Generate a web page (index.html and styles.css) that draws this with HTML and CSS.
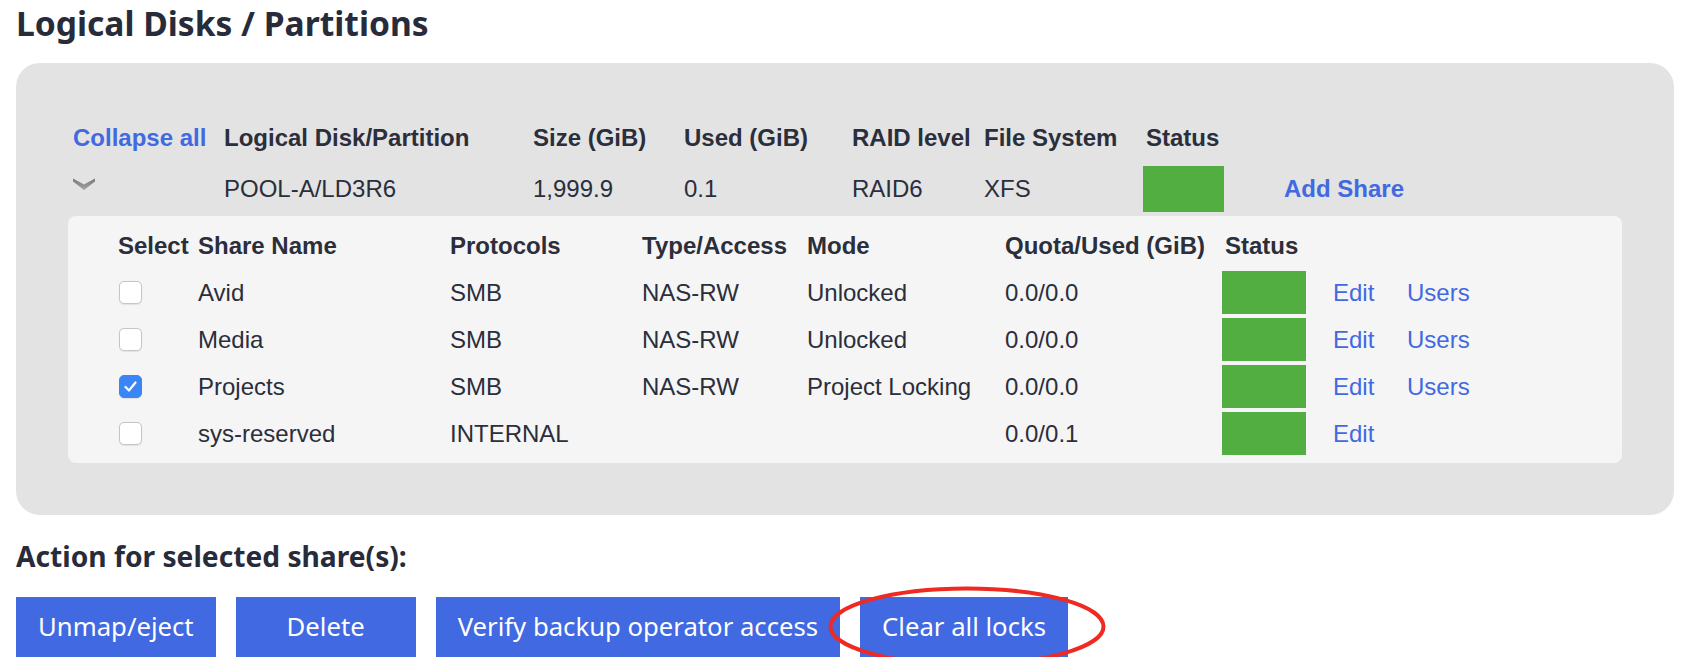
FILE: index.html
```html
<!DOCTYPE html>
<html lang="en">
<head>
<meta charset="utf-8">
<title>Logical Disks / Partitions</title>
<link rel="stylesheet" href="styles.css">
</head>
<body>
<div class="page">
  <h1 class="title">Logical Disks / Partitions</h1>
  <section class="panel">
    <div class="ld-grid">
      <div class="cell first"><a class="link bold" href="#">Collapse all</a></div>
      <div class="cell th">Logical Disk/Partition</div>
      <div class="cell th">Size (GiB)</div>
      <div class="cell th">Used (GiB)</div>
      <div class="cell th">RAID level</div>
      <div class="cell th">File System</div>
      <div class="cell th st">Status</div>
      <div class="cell"></div>

      <div class="cell first">
        <svg class="chevron" width="22" height="12" viewBox="0 0 22 12">
          <defs>
            <linearGradient id="chev" x1="0" y1="0" x2="0" y2="1">
              <stop offset="0" stop-color="#767676"/>
              <stop offset="1" stop-color="#a6a6a6"/>
            </linearGradient>
          </defs>
          <polygon points="0,0.5 11,6.5 22,0.5 22,3.5 11,12 0,3.5" fill="url(#chev)"/>
        </svg>
      </div>
      <div class="cell">POOL-A/LD3R6</div>
      <div class="cell">1,999.9</div>
      <div class="cell">0.1</div>
      <div class="cell">RAID6</div>
      <div class="cell">XFS</div>
      <div class="cell"><span class="status big"></span></div>
      <div class="cell"><a class="link bold" href="#">Add Share</a></div>
    </div>

    <div class="shares">
      <div class="share-grid">
        <div class="cell th">Select</div>
        <div class="cell th">Share Name</div>
        <div class="cell th">Protocols</div>
        <div class="cell th">Type/Access</div>
        <div class="cell th">Mode</div>
        <div class="cell th">Quota/Used (GiB)</div>
        <div class="cell th st">Status</div>
        <div class="cell"></div>
        <div class="cell"></div>

        <div class="cell"><span class="check"></span></div>
        <div class="cell">Avid</div>
        <div class="cell">SMB</div>
        <div class="cell">NAS-RW</div>
        <div class="cell">Unlocked</div>
        <div class="cell">0.0/0.0</div>
        <div class="cell"><span class="status small"></span></div>
        <div class="cell"><a class="link" href="#">Edit</a></div>
        <div class="cell"><a class="link" href="#">Users</a></div>

        <div class="cell"><span class="check"></span></div>
        <div class="cell">Media</div>
        <div class="cell">SMB</div>
        <div class="cell">NAS-RW</div>
        <div class="cell">Unlocked</div>
        <div class="cell">0.0/0.0</div>
        <div class="cell"><span class="status small"></span></div>
        <div class="cell"><a class="link" href="#">Edit</a></div>
        <div class="cell"><a class="link" href="#">Users</a></div>

        <div class="cell"><span class="check on"><svg width="13" height="11" viewBox="0 0 13 11"><polyline points="1.5,6 5,9.5 11.5,1.5" fill="none" stroke="#fff" stroke-width="2.2" stroke-linecap="round" stroke-linejoin="round"/></svg></span></div>
        <div class="cell">Projects</div>
        <div class="cell">SMB</div>
        <div class="cell">NAS-RW</div>
        <div class="cell">Project Locking</div>
        <div class="cell">0.0/0.0</div>
        <div class="cell"><span class="status small"></span></div>
        <div class="cell"><a class="link" href="#">Edit</a></div>
        <div class="cell"><a class="link" href="#">Users</a></div>

        <div class="cell"><span class="check"></span></div>
        <div class="cell">sys-reserved</div>
        <div class="cell">INTERNAL</div>
        <div class="cell"></div>
        <div class="cell"></div>
        <div class="cell">0.0/0.1</div>
        <div class="cell"><span class="status small"></span></div>
        <div class="cell"><a class="link" href="#">Edit</a></div>
        <div class="cell"></div>
      </div>
    </div>
  </section>

  <h2 class="action-title">Action for selected share(s):</h2>
  <div class="actions">
    <button class="btn">Unmap/eject</button>
    <button class="btn">Delete</button>
    <button class="btn">Verify backup operator access</button>
    <div class="btn-wrap">
      <button class="btn">Clear all locks</button>
      <svg class="highlight" width="278" height="81" viewBox="0 0 278 81">
        <ellipse cx="139" cy="40.5" rx="136.5" ry="38" fill="none" stroke="#ee2a22" stroke-width="4"/>
      </svg>
    </div>
  </div>
</div>
</body>
</html>
```

FILE: styles.css
```css
* { box-sizing: border-box; }

body {
  margin: 0;
  background: #ffffff;
  font-family: "Liberation Sans", Arial, sans-serif;
  color: #2b2e3b;
}

.page {
  padding: 0 10px 0 16px;
}

.title {
  margin: 0;
  font-family: "Noto Sans", "Open Sans", sans-serif;
  font-weight: 700;
  font-size: 33.6px;
  line-height: 46px;
  color: #282b3a;
}

.panel {
  margin-top: 17px;
  background: #e3e3e3;
  border-radius: 24px;
  padding: 52px;
}

.ld-grid {
  display: grid;
  grid-template-columns: 156px 309px 151px 168px 132px 159px 141px 1fr;
  grid-auto-rows: 46px;
  row-gap: 5px;
  font-size: 24px;
}

.cell {
  display: flex;
  align-items: center;
  white-space: nowrap;
}

.cell.first {
  padding-left: 5px;
}

.th {
  font-weight: 700;
}

.th.st {
  padding-left: 3px;
}

.link {
  color: #4169e1;
  text-decoration: none;
}

.link.bold {
  font-weight: 700;
}

.chevron {
  display: block;
  margin-bottom: 10px;
}

.status {
  display: block;
  background: #52ae40;
}

.status.big {
  width: 81px;
  height: 46px;
}

.status.small {
  width: 84px;
  height: 43px;
}

.shares {
  margin-top: 4px;
  background: #f5f5f5;
  border-radius: 8px;
  padding: 8px 0 8px 50px;
}

.share-grid {
  display: grid;
  grid-template-columns: 80px 252px 192px 165px 198px 217px 111px 74px 1fr;
  grid-auto-rows: 43px;
  row-gap: 4px;
  font-size: 24px;
}

.check {
  display: flex;
  align-items: center;
  justify-content: center;
  width: 23px;
  height: 23px;
  margin-left: 1px;
  border-radius: 5px;
  background: #ffffff;
  border: 1px solid #c6c6c6;
  box-shadow: 0 0.5px 1px rgba(0, 0, 0, 0.08);
}

.check.on {
  background: #3a86f7;
  border-color: #3a86f7;
}

.action-title {
  margin: 22px 0 0;
  font-family: "Noto Sans", "Open Sans", sans-serif;
  font-weight: 700;
  font-size: 28.2px;
  line-height: 38px;
  color: #282b3a;
}

.actions {
  margin-top: 22px;
  display: flex;
  gap: 20px;
  align-items: flex-start;
}

.btn {
  height: 60px;
  min-width: 180px;
  padding: 0 22px;
  border: none;
  border-radius: 0;
  background: #4169e1;
  color: #ffffff;
  font-family: "Noto Sans", "Open Sans", sans-serif;
  font-size: 25.7px;
  line-height: 1;
  white-space: nowrap;
  cursor: pointer;
}

.btn-wrap {
  position: relative;
}

.btn-wrap .btn {
  display: block;
}

.highlight {
  position: absolute;
  left: -32px;
  top: -11px;
  pointer-events: none;
}
```
